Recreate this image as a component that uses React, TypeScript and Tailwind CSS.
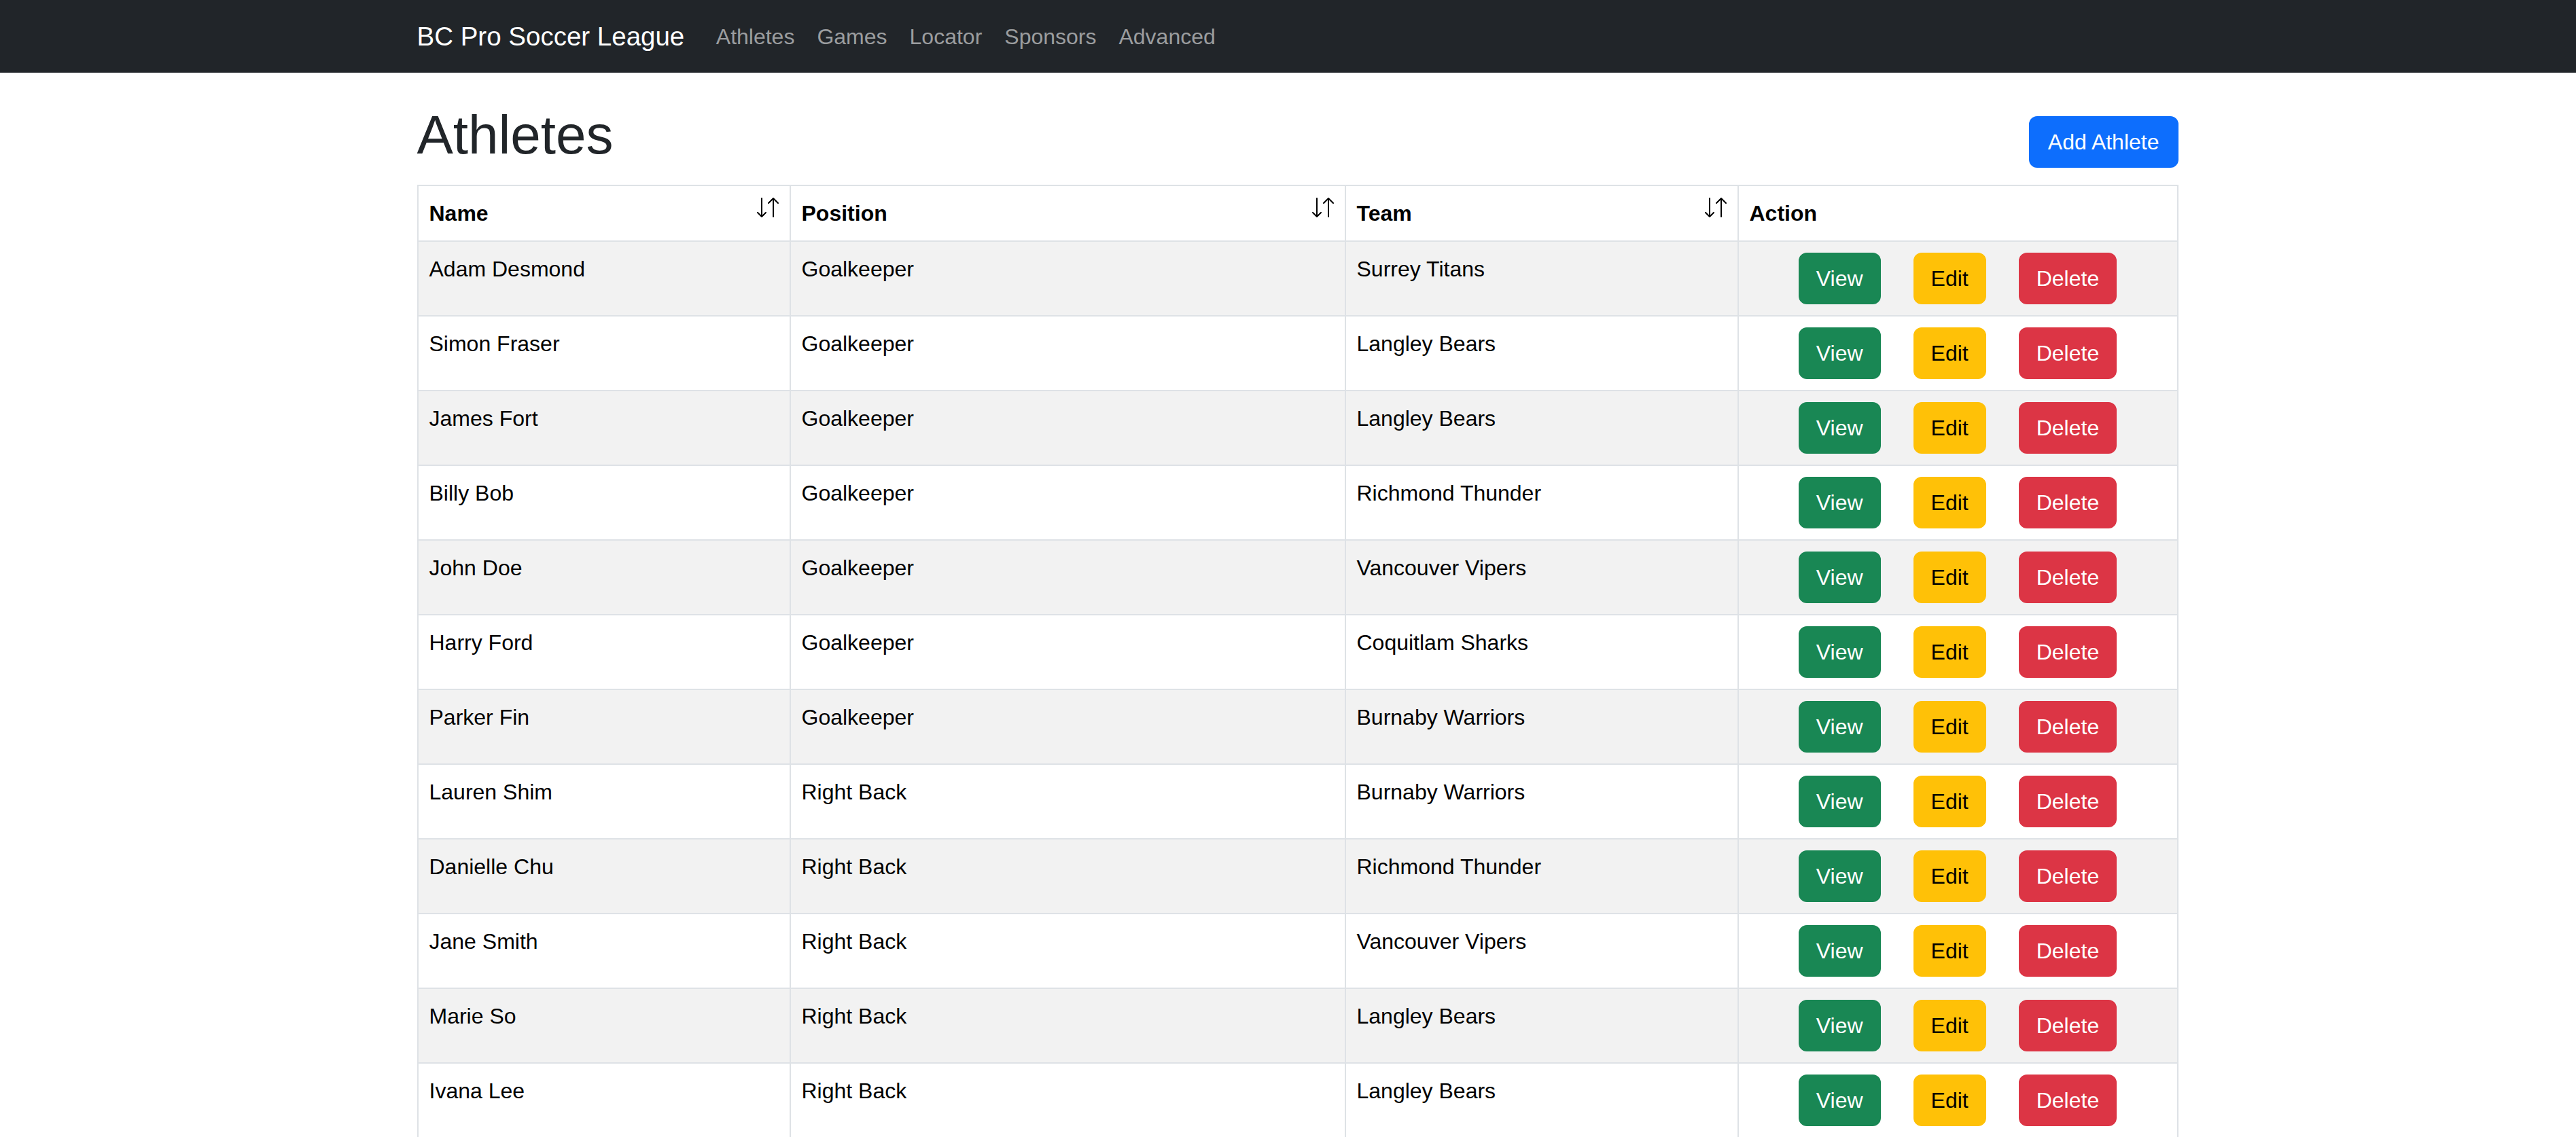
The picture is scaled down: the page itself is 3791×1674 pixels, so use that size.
import React from "react";

const ATHLETES = [
  { name: "Adam Desmond", position: "Goalkeeper", team: "Surrey Titans" },
  { name: "Simon Fraser", position: "Goalkeeper", team: "Langley Bears" },
  { name: "James Fort", position: "Goalkeeper", team: "Langley Bears" },
  { name: "Billy Bob", position: "Goalkeeper", team: "Richmond Thunder" },
  { name: "John Doe", position: "Goalkeeper", team: "Vancouver Vipers" },
  { name: "Harry Ford", position: "Goalkeeper", team: "Coquitlam Sharks" },
  { name: "Parker Fin", position: "Goalkeeper", team: "Burnaby Warriors" },
  { name: "Lauren Shim", position: "Right Back", team: "Burnaby Warriors" },
  { name: "Danielle Chu", position: "Right Back", team: "Richmond Thunder" },
  { name: "Jane Smith", position: "Right Back", team: "Vancouver Vipers" },
  { name: "Marie So", position: "Right Back", team: "Langley Bears" },
  { name: "Ivana Lee", position: "Right Back", team: "Langley Bears" },
];

const NAV_LINKS = ["Athletes", "Games", "Locator", "Sponsors", "Advanced"];

function SortIcon() {
  return (
    <svg
      viewBox="0 0 32 32"
      className="float-right w-[32px] h-[32px]"
      fill="none"
      stroke="currentColor"
      strokeWidth={2}
      strokeLinecap="round"
      strokeLinejoin="round"
    >
      <path d="M7 2v27M1 23l6 6 6-6" />
      <path d="M24 29V2M17 9l7-7 7 7" />
    </svg>
  );
}

const th = "border-2 border-[#dee2e6] p-[16px] text-left align-top font-bold";
const td = "border-2 border-[#dee2e6] p-[16px] align-top";
const btn = "rounded-[12px] border-2 px-[24px] py-[12px] text-[32px] leading-[48px]";

export default function App() {
  return (
    <div className="h-screen overflow-hidden bg-white font-['Liberation_Sans',Arial,sans-serif] text-[#212529]">
      <nav className="h-[107px] bg-[#212529]">
        <div className="mx-auto flex h-full w-[2620px] items-center pl-[28px]">
          <span className="mr-[30px] text-[38.5px] leading-[1.5] text-white">BC Pro Soccer League</span>
          <ul className="flex">
            {NAV_LINKS.map((l) => (
              <li key={l} className="px-[16.5px] text-[32px] leading-[48px] text-[#9b9d9f]">
                {l}
              </li>
            ))}
          </ul>
        </div>
      </nav>

      <main className="mx-auto w-[2620px] pl-[28px]">
        <div className="flex items-end justify-between pt-[44px]">
          <h1 className="text-[80px] leading-[1.2] font-normal">Athletes</h1>
          <button className={`${btn} border-[#0d6efd] bg-[#0d6efd] px-[26px] text-white`}>Add Athlete</button>
        </div>

        <table className="mt-[25px] w-[2592px] table-fixed border-collapse text-[32px] leading-[48px] text-black">
          <thead>
            <tr>
              <th className={`${th} w-[548px]`}>
                <SortIcon />
                Name
              </th>
              <th className={`${th} w-[817px]`}>
                <SortIcon />
                Position
              </th>
              <th className={`${th} w-[578px]`}>
                <SortIcon />
                Team
              </th>
              <th className={th}>Action</th>
            </tr>
          </thead>
          <tbody>
            {ATHLETES.map((a, i) => (
              <tr key={a.name} className={i % 2 === 0 ? "bg-[#f2f2f2]" : "bg-white"}>
                <td className={td}>{a.name}</td>
                <td className={td}>{a.position}</td>
                <td className={td}>{a.team}</td>
                <td className={td}>
                  <div className="flex justify-center gap-[48px]">
                    <button className={`${btn} border-[#198754] bg-[#198754] text-white`}>View</button>
                    <button className={`${btn} border-[#ffc107] bg-[#ffc107] text-black`}>Edit</button>
                    <button className={`${btn} border-[#dc3545] bg-[#dc3545] text-white`}>Delete</button>
                  </div>
                </td>
              </tr>
            ))}
          </tbody>
        </table>
      </main>
    </div>
  );
}
